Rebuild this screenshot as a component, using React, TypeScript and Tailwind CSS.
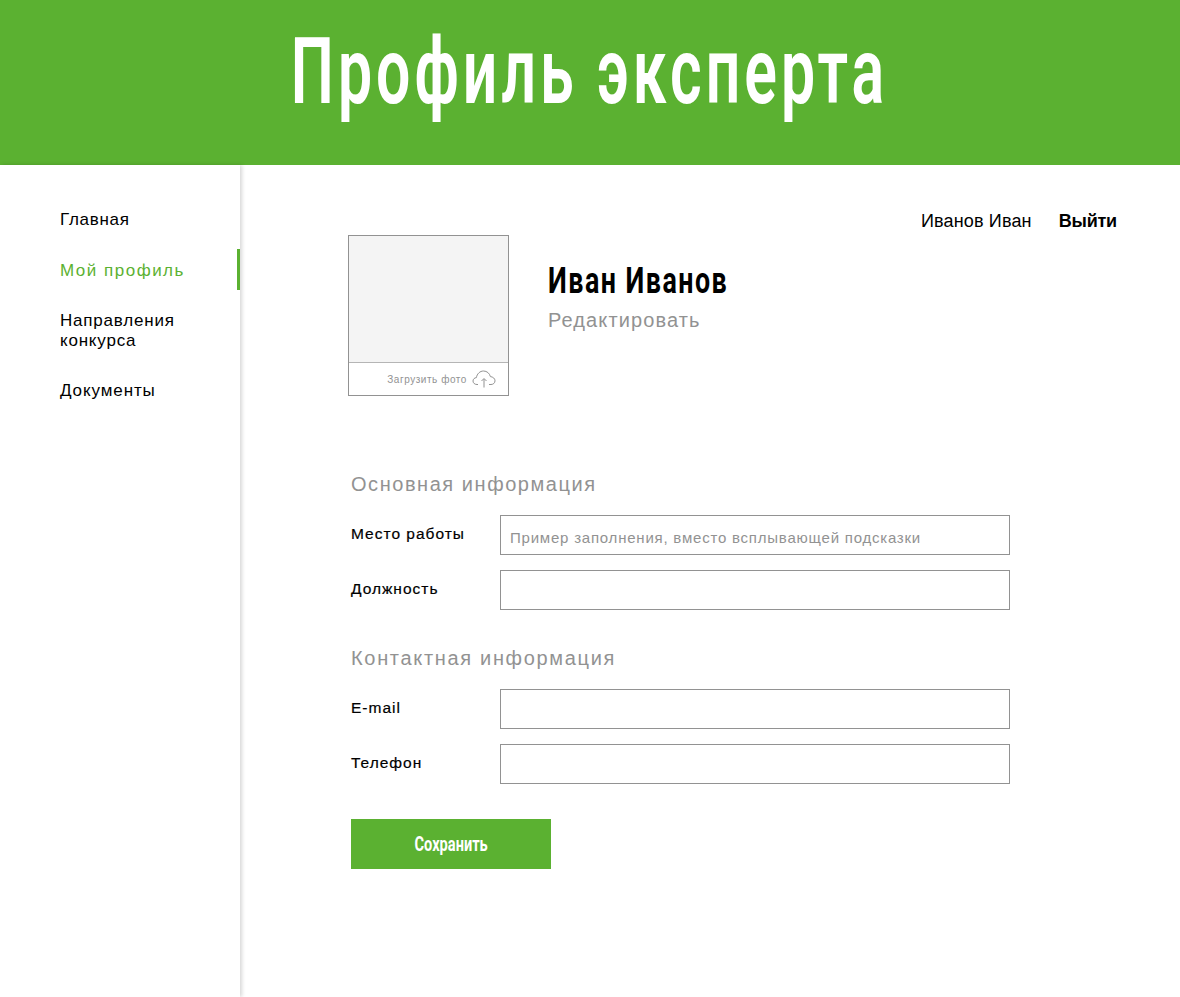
const sans = "font-['Liberation_Sans',Arial,sans-serif]";
const condensed = "font-['Roboto',sans-serif]";

type FieldProps = {
  label: string;
  placeholder?: string;
};

function Field({ label, placeholder }: FieldProps) {
  return (
    <div className="flex h-10 items-start">
      <label className="w-[149px] pt-[9px] text-[15.5px] leading-[20px] tracking-[1px] text-black [-webkit-text-stroke:0.2px_black]">
        {label}
      </label>
      <div className="flex h-10 w-[510px] items-end border border-[#929292] bg-white px-[9px] pb-[6px]">
        {placeholder && (
          <span className="text-[15px] leading-[20px] tracking-[0.78px] text-[#929292]">
            {placeholder}
          </span>
        )}
      </div>
    </div>
  );
}

function UploadIcon() {
  return (
    <svg width="24" height="18" viewBox="0 0 24 18" fill="none" stroke="#929292" strokeWidth="1">
      <path d="M6 14.5H5C2.5 14.5 1 12.8 1 11C1 9.2 2.4 7.8 4.4 7.6C5 3.8 8 1 11.5 1C15 1 17.6 3.4 18.4 6.6C21 6.8 23 8.6 23 10.8C23 13 21.2 14.5 19 14.5H17" />
      <path d="M12 17.5V9M9.5 11L12 8.5L14.5 11" />
    </svg>
  );
}

const navItems = [
  { label: "Главная", tracking: "tracking-[0.7px]" },
  { label: "Мой профиль", tracking: "tracking-[1.5px]" },
  { label: "Направления конкурса", tracking: "tracking-[0.8px]" },
  { label: "Документы", tracking: "tracking-[0.9px]" },
];

export default function App() {
  return (
    <div className={`flex h-[997px] w-[1180px] flex-col overflow-hidden bg-white ${sans}`}>
      <header className="flex h-[165px] shrink-0 items-start justify-center bg-[#5bb131] pt-[20px]">
        <h1
          className={`scale-x-[0.66] whitespace-nowrap text-[92px] font-semibold leading-[104px] tracking-[6.1px] text-white ${condensed}`}
        >
          Профиль эксперта
        </h1>
      </header>

      <div className="flex flex-1">
        <aside className="w-[240px] shrink-0 pt-[45px] shadow-[2px_0_4px_rgba(0,0,0,0.16)]">
          <nav className="flex flex-col gap-[30px]">
            {navItems.map((item) => {
              const active = item.label === "Мой профиль";
              return (
                <div key={item.label} className="relative pl-[60px] pr-[40px] first:mb-px">
                  <a
                    className={`block text-[17px] leading-[20px] ${item.tracking} ${active ? "text-[#5bb131]" : "text-black"}`}
                  >
                    {item.label}
                  </a>
                  {active && (
                    <span className="absolute right-0 top-[-12px] h-[41px] w-[3px] bg-[#5bb131]" />
                  )}
                </div>
              );
            })}
          </nav>
        </aside>

        <main className="flex-1">
          <div className="flex justify-end pr-[63px] pt-[46px] text-[18px] leading-[20px]">
            <span className="tracking-[0.15px] text-black">Иванов Иван</span>
            <span className="ml-[27px] font-bold tracking-[-0.2px] text-black">Выйти</span>
          </div>

          <div className="ml-[108px] mt-[4px] flex">
            <div className="flex h-[161px] w-[161px] flex-col border border-[#929292]">
              <div className="h-[127px] border-b border-[#b5b5b5] bg-[#f4f4f4]" />
              <div className="flex flex-1 items-center justify-end gap-[5px] pr-[12px]">
                <span className="text-[10px] tracking-[0.55px] text-[#929292]">Загрузить фото</span>
                <UploadIcon />
              </div>
            </div>
            <div className="ml-[39px] pt-[24px]">
              <div
                className={`origin-left scale-x-[0.745] whitespace-nowrap text-[36px] font-bold leading-[44px] tracking-[2px] text-black ${condensed}`}
              >
                Иван Иванов
              </div>
              <div className="mt-[5px] text-[20px] leading-[24px] tracking-[1.1px] text-[#929292]">
                Редактировать
              </div>
            </div>
          </div>

          <div className="ml-[111px] mt-[76px]">
            <h2 className="text-[20px] leading-[24px] tracking-[1.55px] text-[#929292]">
              Основная информация
            </h2>
            <div className="mt-[19px] flex flex-col gap-[15px]">
              <Field label="Место работы" placeholder="Пример заполнения, вместо всплывающей подсказки" />
              <Field label="Должность" />
            </div>

            <h2 className="mt-[36px] text-[20px] leading-[24px] tracking-[1.68px] text-[#929292]">
              Контактная информация
            </h2>
            <div className="mt-[19px] flex flex-col gap-[15px]">
              <Field label="E-mail" />
              <Field label="Телефон" />
            </div>

            <button className="mt-[35px] block h-[50px] w-[200px] bg-[#5bb131] text-white">
              <span className={`inline-block scale-x-[0.73] whitespace-nowrap text-[20px] font-bold ${condensed}`}>
                Сохранить
              </span>
            </button>
          </div>
        </main>
      </div>
    </div>
  );
}
